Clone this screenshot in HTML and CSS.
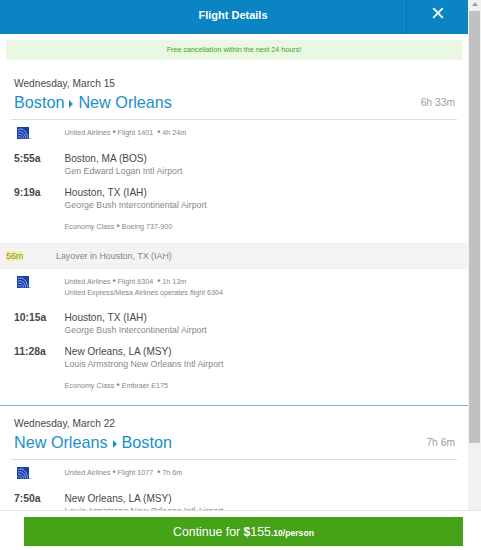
FILE: index.html
```html
<!DOCTYPE html>
<html lang="en">
<head>
    <meta charset="UTF-8">
    <meta name="viewport" content="width=device-width, initial-scale=1.0">
    <title>Flight Details</title>
    <link rel="stylesheet" href="styles.css">
</head>
<body>
    <svg width="0" height="0" class="defs">
        <symbol id="united" viewBox="0 0 14 13">
            <rect width="12" height="12" fill="#1a3fa8"/>
            <g fill="none" stroke="#a9bdec" stroke-width="0.8">
                <path d="M1 2.5C6 0.5 10.5 5 10.5 11.5"/>
                <path d="M1 5C5 3.5 8.5 7 8.5 11.5"/>
                <path d="M1 7.5C4 6.5 6.5 8.5 6.5 11.5"/>
                <path d="M1 10C3 9.5 4.5 10 4.5 11.5"/>
            </g>
            <rect x="12.6" y="11" width="1" height="1" fill="#7d93d2"/>
        </symbol>
    </svg>

    <div class="main">
        <div class="panel">
            <!-- Header -->
            <div class="header">
                <h1>Flight Details</h1>
                <button type="button" class="close" aria-label="Close">
                    <svg width="12" height="12" viewBox="0 0 12 12"><path d="M1.2 1.2L10.8 10.8M10.8 1.2L1.2 10.8" stroke="#fff" stroke-width="1.9"/></svg>
                </button>
            </div>

            <div class="notice">Free cancellation within the next 24 hours!</div>

            <!-- Outbound -->
            <div class="trip">
                <div class="date">Wednesday, March 15</div>
                <div class="route">
                    <h2>Boston<i class="arrow"></i>New Orleans</h2>
                    <span class="duration">6h 33m</span>
                </div>

                <div class="row airline">
                    <svg class="logo"><use href="#united"/></svg>
                    <div class="meta">United Airlines <b>•</b> Flight 1401 &nbsp;<b>•</b> 4h 24m</div>
                </div>
                <div class="row stop">
                    <div class="time">5:55a</div>
                    <div>
                        <div class="city">Boston, MA (BOS)</div>
                        <div class="airport">Gen Edward Logan Intl Airport</div>
                    </div>
                </div>
                <div class="row stop">
                    <div class="time">9:19a</div>
                    <div>
                        <div class="city">Houston, TX (IAH)</div>
                        <div class="airport">George Bush Intercontinental Airport</div>
                    </div>
                </div>
                <div class="row cabin">
                    <div class="meta">Economy Class <b>•</b> Boeing 737-900</div>
                </div>
            </div>

            <!-- Layover -->
            <div class="layover">
                <div><mark>56m</mark></div>
                <div>Layover in Houston, TX (IAH)</div>
            </div>

            <div class="trip connection">
                <div class="row airline">
                    <svg class="logo"><use href="#united"/></svg>
                    <div class="meta">United Airlines <b>•</b> Flight 6304 &nbsp;<b>•</b> 1h 13m<br>United Express/Mesa Airlines operates flight 6304</div>
                </div>
                <div class="row stop">
                    <div class="time">10:15a</div>
                    <div>
                        <div class="city">Houston, TX (IAH)</div>
                        <div class="airport">George Bush Intercontinental Airport</div>
                    </div>
                </div>
                <div class="row stop">
                    <div class="time">11:28a</div>
                    <div>
                        <div class="city">New Orleans, LA (MSY)</div>
                        <div class="airport">Louis Armstrong New Orleans Intl Airport</div>
                    </div>
                </div>
                <div class="row cabin">
                    <div class="meta">Economy Class <b>•</b> Embraer E175</div>
                </div>
            </div>

            <!-- Return -->
            <div class="trip return">
                <div class="date">Wednesday, March 22</div>
                <div class="route">
                    <h2>New Orleans<i class="arrow"></i>Boston</h2>
                    <span class="duration">7h 6m</span>
                </div>

                <div class="row airline">
                    <svg class="logo"><use href="#united"/></svg>
                    <div class="meta">United Airlines <b>•</b> Flight 1077 &nbsp;<b>•</b> 7h 6m</div>
                </div>
                <div class="row stop">
                    <div class="time">7:50a</div>
                    <div>
                        <div class="city">New Orleans, LA (MSY)</div>
                        <div class="airport">Louis Armstrong New Orleans Intl Airport</div>
                    </div>
                </div>
            </div>
        </div>

        <!-- Scrollbar -->
        <div class="scrollbar">
            <div class="up"></div>
            <div class="thumb"></div>
        </div>
    </div>

    <!-- Footer -->
    <div class="footer">
        <button type="button" class="continue">Continue for <b>$</b>155<small>.10/person</small></button>
    </div>
</body>
</html>
```
FILE: styles.css
```css
* {
    margin: 0;
    padding: 0;
    box-sizing: border-box;
}

body {
    width: 481px;
    height: 550px;
    overflow: hidden;
    background: #fff;
    color: #484848;
    font-family: "Liberation Sans", Arial, sans-serif;
    font-size: 10.1px;
    display: flex;
    flex-direction: column;
}

.defs {
    position: absolute;
}

.main {
    display: flex;
    height: 510px;
    overflow: hidden;
}

.panel {
    width: 468px;
    height: 510px;
    overflow: hidden;
}

/* Header */
.header {
    display: flex;
    height: 34px;
    background: #0a84c2;
    color: #fff;
}

.header h1 {
    flex: 1;
    padding: 0 0 4px 60px;
    font-size: 11px;
    line-height: 30px;
    text-align: center;
}

.close {
    width: 62px;
    padding-bottom: 8px;
    border: none;
    border-left: 1px solid #0970a8;
    background: none;
    display: flex;
    align-items: center;
    justify-content: center;
}

.notice {
    height: 20px;
    margin: 6px 6px 0;
    background: #eaf7e3;
    color: #42a21b;
    font-size: 7.2px;
    line-height: 20px;
    text-align: center;
}

/* Trip */
.trip {
    height: 183px;
    padding: 17px 11px 0;
}

.date {
    padding-left: 3px;
    font-size: 10.2px;
    line-height: 14px;
}

.route {
    display: flex;
    justify-content: space-between;
    align-items: center;
    height: 29px;
    padding: 0 2px 5px 3px;
    border-bottom: 1px solid #dedede;
}

.route h2 {
    color: #1a8fca;
    font-size: 16.2px;
    font-weight: normal;
}

.arrow {
    display: inline-block;
    margin: 0 5px 0 5px;
    border: solid transparent;
    border-width: 4px 0 4px 4px;
    border-left-color: #1a8fca;
}

.duration {
    color: #a0a0a0;
    font-size: 10.3px;
}

.row {
    display: grid;
    grid-template-columns: 50.5px 1fr;
    padding-left: 3px;
}

.airline {
    height: 32px;
    padding-top: 7px;
}

.logo {
    width: 14px;
    height: 13px;
    margin-left: 3px;
}

.meta {
    color: #888;
    font-size: 7.2px;
    line-height: 11px;
}

.meta b {
    font-size: 9px;
    line-height: 1;
}

.stop {
    height: 33.5px;
}

.time {
    font-size: 10.4px;
    font-weight: bold;
    line-height: 14px;
}

.city {
    line-height: 14px;
}

.airport {
    color: #888;
    font-size: 8.8px;
    line-height: 11px;
}

.cabin {
    padding-top: 2px;
}

.cabin .meta {
    grid-column: 2;
}

/* Layover */
.layover {
    display: grid;
    grid-template-columns: 50px 1fr;
    height: 26px;
    padding-left: 6px;
    background: #f3f3f3;
    color: #858585;
    font-size: 8.9px;
    line-height: 26px;
}

.layover mark {
    background: #f5f58c;
    color: #858585;
}

.connection {
    height: 136px;
    padding-top: 0;
}

.connection .airline {
    height: 42px;
}

/* Return */
.return {
    border-top: 1px solid #6cb5d8;
    padding-top: 11px;
}

/* Scrollbar */
.scrollbar {
    width: 13px;
    padding: 0 0 0 1px;
    background: #f1f1f1;
}

.up {
    width: 6px;
    margin: 2px 0 5px 3px;
    border: solid transparent;
    border-width: 0 3px 4px;
    border-bottom-color: #a3a3a3;
}

.thumb {
    width: 11px;
    height: 432px;
    background: #c1c1c1;
}

/* Footer */
.footer {
    height: 40px;
    padding: 6px 18px 0 24px;
    border-top: 1px solid #e2e2e2;
}

.continue {
    display: block;
    width: 100%;
    height: 29px;
    border: none;
    background: #46a216;
    color: #fff;
    font-family: inherit;
    font-size: 12.3px;
}

.continue small {
    font-size: 8.6px;
    font-weight: bold;
}
```
